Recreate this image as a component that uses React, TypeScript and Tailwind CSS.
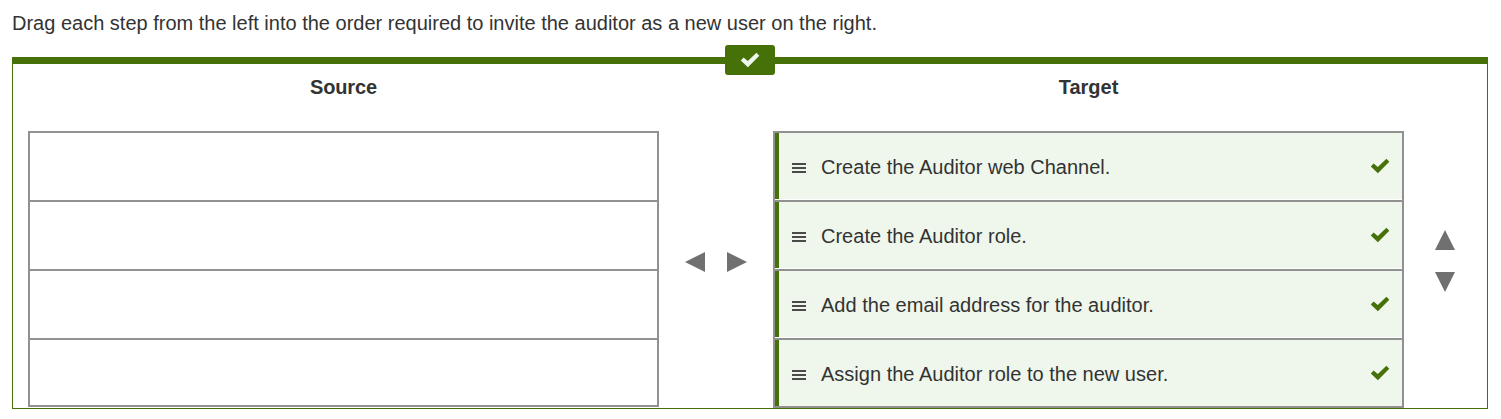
import React from "react";

const steps = [
  "Create the Auditor web Channel.",
  "Create the Auditor role.",
  "Add the email address for the auditor.",
  "Assign the Auditor role to the new user.",
];

function Check({ className }: { className: string }) {
  return (
    <svg viewBox="0 0 18 14" className={"h-[14px] w-[18px] " + className} fill="currentColor">
      <path d="M-0.2 7.6 L2.6 4.6 L6.8 8.1 L15.4 -0.2 L18.3 2.7 L6.9 14.2 Z" />
    </svg>
  );
}

function Grip() {
  return (
    <svg viewBox="0 0 14 10" className="mt-[3px] h-[10px] w-[14px] text-[#4a4a4a]" fill="currentColor">
      <path d="M0 0h14v2H0zM0 4h14v2H0zM0 8h14v2H0z" />
    </svg>
  );
}

function Arrow({ points }: { points: string }) {
  return (
    <svg viewBox="0 0 20 20" className="h-5 w-5 text-[#707070]" fill="currentColor">
      <polygon points={points} />
    </svg>
  );
}

export default function App() {
  return (
    <div className="h-[419px] w-[1501px] bg-white px-3 font-['Liberation_Sans',Arial,sans-serif] text-[20px] leading-7 text-[#333]">
      <p className="h-[57px] pt-[9px]">
        Drag each step from the left into the order required to invite the auditor as a new user on the right.
      </p>
      <div className="relative h-[352px] w-[1476px] border border-t-[7px] border-[#467109]">
        <div className="absolute -top-[19px] left-[712px] flex h-[30px] w-[50px] items-center justify-center rounded-[3px] bg-[#467109]">
          <Check className="overflow-visible text-[#eff7ec]" />
        </div>
        <div className="flex pl-[15px]">
          <section className="w-[631px]">
            <h2 className="h-[67px] pt-[9px] text-center font-bold tracking-[-0.1px]">Source</h2>
            <ul className="h-[276px] border-2 border-[#919191]">
              {steps.map((step) => (
                <li key={step} className="h-[69px] border-b-2 border-[#919191] last:h-[65px] last:border-b-0" />
              ))}
            </ul>
          </section>
          <div className="flex w-[114px] gap-[22px] pt-[188px] pl-[26px]">
            <Arrow points="0,10 20,0 20,20" />
            <Arrow points="0,0 20,10 0,20" />
          </div>
          <section className="w-[631px]">
            <h2 className="h-[67px] pt-[9px] text-center font-bold">Target</h2>
            <ul className="h-[277px] border-2 border-[#919191]">
              {steps.map((step) => (
                <li key={step} className="h-[69px] border-b-2 border-[#919191] pb-px last:h-[66px] last:border-b-0 last:pb-0">
                  <div className="flex h-full items-center border-l-4 border-[#467109] bg-[#eff7ec] pr-[13px] pl-[13px]">
                    <Grip />
                    <span className="ml-[15px] flex-1 pt-0.5 tracking-[0.01px]">{step}</span>
                    <Check className="overflow-visible text-[#467109]" />
                  </div>
                </li>
              ))}
            </ul>
          </section>
          <div className="flex flex-col gap-[22px] pt-[166px] pl-[31px]">
            <Arrow points="10,0 20,20 0,20" />
            <Arrow points="0,0 20,0 10,20" />
          </div>
        </div>
      </div>
    </div>
  );
}
